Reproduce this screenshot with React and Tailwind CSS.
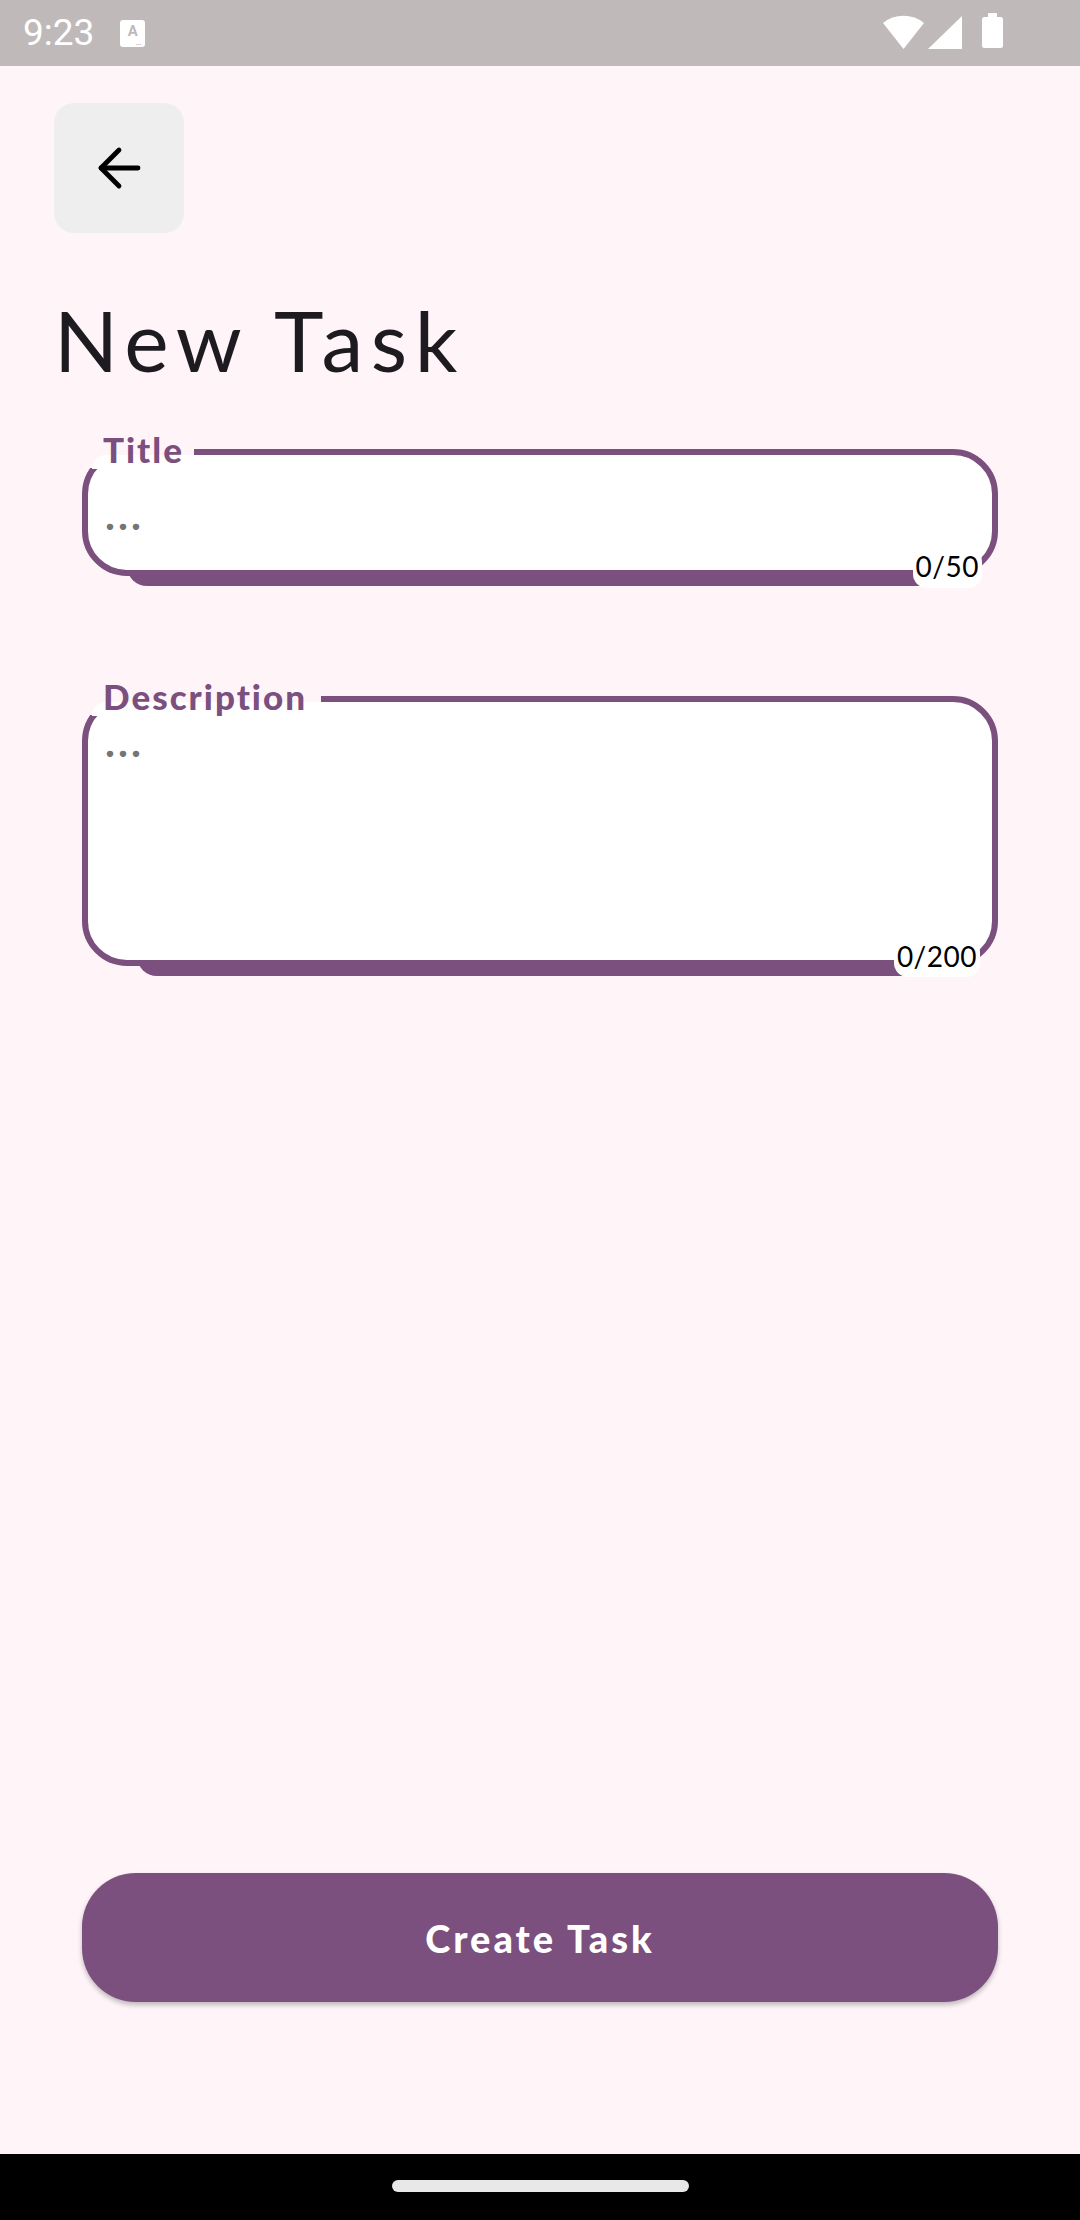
import React from 'react';

const PAGE = 'bg-[#fff5f9]';

function StatusBar() {
  return (
    <div className="h-[66px] bg-[#bfb9ba] flex items-center px-[23px] shrink-0">
      <span className="text-white text-[37px] leading-none font-['Roboto',sans-serif] mt-[-1px]">9:23</span>
      {/* keyboard / autofill badge */}
      <div className="ml-[26px] w-[25px] h-[27px] bg-white rounded-[3px] flex flex-col items-center justify-start relative">
        <span className="text-[#bfb9ba] text-[15px] font-bold leading-none mt-[4px] font-['Roboto',sans-serif]">A</span>
        <span className="absolute bottom-[1px] right-[4px] text-[#bfb9ba] text-[8px] leading-none font-bold">...</span>
      </div>
      <div className="ml-auto mr-[52px] flex items-center h-full">
        <svg width="44" height="36" viewBox="0 0 44 36">
          <path d="M1 8 A33 33 0 0 1 42 8 L21.5 34 Z" fill="#fff" />
        </svg>
        <svg width="36" height="36" viewBox="0 0 36 36" className="ml-[1px]">
          <path d="M1 34 L35 34 L35 1 Z" fill="#fff" />
        </svg>
        <svg width="24" height="40" viewBox="0 0 24 40" className="ml-[18px]">
          <rect x="7" y="0" width="9" height="6" rx="1" fill="#fff" />
          <rect x="1" y="4" width="21" height="31" rx="2.5" fill="#fff" />
        </svg>
      </div>
    </div>
  );
}

function Field({ label, counter, height, coverW, hintTop, shadowLeft, counterBox }) {
  return (
    <div className="relative mx-[28px]" style={{ height }}>
      {/* offset bar peeking under the box */}
      <div
        className="absolute bottom-[-10px] h-[30px] right-[70px] rounded-bl-[20px] bg-[#7b4f7e]"
        style={{ left: shadowLeft }}
      />
      <div className="relative h-full rounded-[45px] border-[6px] border-[#7b4f7e] bg-white pl-[17px]">
        <div
          className="text-[42px] leading-[40px] tracking-[3px] font-bold text-[#757575] font-['Lato',sans-serif]"
          style={{ marginTop: hintTop }}
        >
          ...
        </div>
      </div>
      {/* notch behind label */}
      <div className={`absolute left-[-4px] top-[-9px] h-[28px] ${PAGE}`} style={{ width: coverW + 4 }} />
      <div className="absolute left-[10px] top-[6px] h-[14px] bg-white rounded-tl-[22px]" style={{ width: coverW - 10 }} />
      <span className="absolute left-[21px] top-[-17px] text-[35px] leading-[35px] tracking-[2px] font-black text-[#7b4f7e] font-['Lato',sans-serif]">
        {label}
      </span>
      <div
        className="absolute bg-white rounded-[14px] px-[3px] pt-[4px] text-[28px] leading-[28px] tracking-[0.5px] text-black font-['Lato',sans-serif]"
        style={counterBox}
      >
        {counter}
      </div>
    </div>
  );
}

export default function App() {
  return (
    <div className={`h-[2220px] w-[1080px] flex flex-col ${PAGE} font-['Lato',sans-serif]`}>
      <StatusBar />
      <div className="flex-1 flex flex-col px-[54px] pt-[37px]">
        <button className="w-[130px] h-[130px] rounded-[20px] bg-[#eeeeee] flex items-center justify-center">
          <svg width="48" height="48" viewBox="0 0 48 48" fill="none" stroke="#000" strokeWidth="4.8" strokeLinecap="round" strokeLinejoin="round">
            <path d="M43 24 H6" />
            <path d="M24 6 L6 24 L24 42" />
          </svg>
        </button>

        <h1 className="mt-[65px] h-[84px] text-[84px] leading-[84px] font-normal text-[#1d1b20] tracking-[7.5px] font-['Lato',sans-serif]">
          New Task
        </h1>

        <div className="mt-[67px]">
          <Field
            label="Title"
            counter="0/50"
            height={127}
            coverW={112}
            hintTop={39}
            shadowLeft={45}
            counterBox={{ right: 16, bottom: -12, paddingBottom: 8 }}
          />
        </div>

        <div className="mt-[120px]">
          <Field
            label="Description"
            counter="0/200"
            height={270}
            coverW={239}
            hintTop={19}
            shadowLeft={55}
            counterBox={{ right: 18, bottom: -11, paddingBottom: 7 }}
          />
        </div>

        <div className="mt-auto mb-[152px] mx-[28px] h-[129px] rounded-[54px] bg-[#7b4f7e] shadow-[0_3px_5px_rgba(0,0,0,0.25)] flex items-center justify-center">
          <span className="text-white text-[38px] font-black tracking-[3px] leading-none font-['Lato',sans-serif]">Create Task</span>
        </div>
      </div>
      <div className="h-[66px] bg-black flex justify-center shrink-0">
        <div className="mt-[26px] w-[297px] h-[12px] rounded-full bg-[#e8e8e8]" />
      </div>
    </div>
  );
}
